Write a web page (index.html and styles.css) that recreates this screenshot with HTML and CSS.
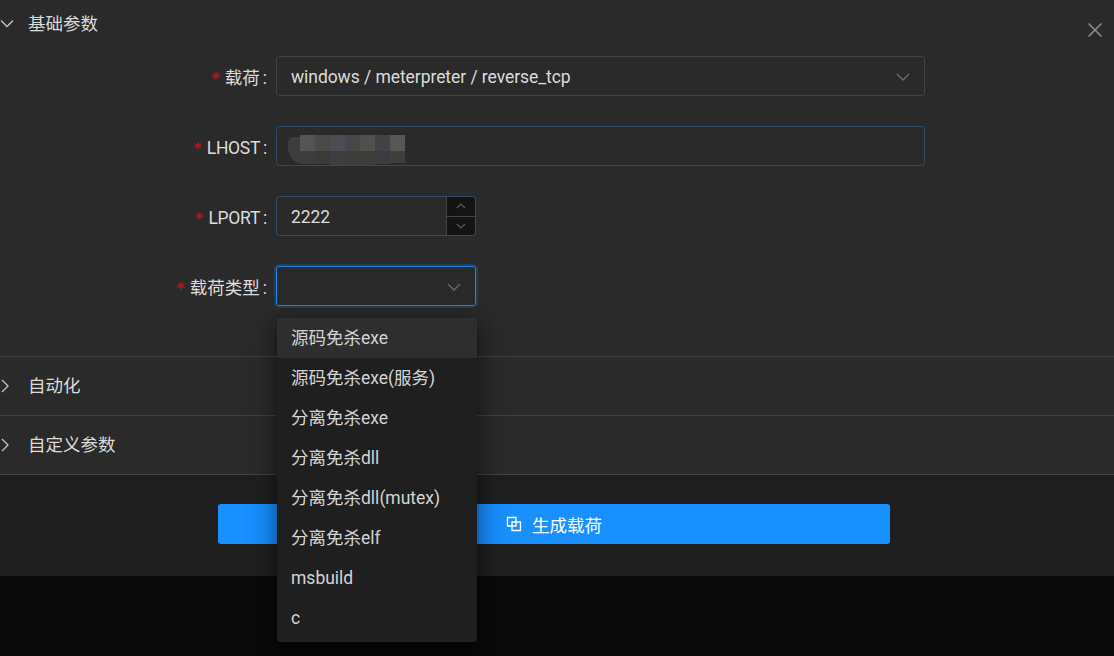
FILE: index.html
```html
<!DOCTYPE html>
<html lang="zh">
<head>
<meta charset="utf-8">
<title>生成载荷</title>
<link rel="stylesheet" href="styles.css">
</head>
<body>
<div class="modal">
  <svg class="close" width="16" height="16" viewBox="0 0 16 16"><path d="M1.500 1.500 14.500 14.500M14.500 1.500 1.500 14.500"/></svg>
  <section class="panel panel-open">
    <header class="panel-head head-first">
      <svg class="arrow arrow-down" width="14" height="14" viewBox="0 0 14 14"><path d="M1 3.500 7 9.500 13 3.500"/></svg>
      <span>基础参数</span>
    </header>
    <div class="form">
      <div class="row">
        <label class="label"><i class="req">*</i>载荷<span class="colon">:</span></label>
        <div class="control wide muted-border"><span class="value">windows / meterpreter / reverse_tcp</span>
          <svg class="chev" width="14" height="14" viewBox="0 0 14 14"><path d="M1 4 7 10 13 4"/></svg></div>
      </div>
      <div class="row">
        <label class="label label-latin"><i class="req">*</i>LHOST<span class="colon">:</span></label>
        <div class="control wide blue-border">
          <svg class="blur" width="118" height="30" viewBox="0 0 118 30">
            <path fill="#3d3d3d" d="M0 6 4 2h8v12H0zM4 14h8v14H10Q2 26 0 14z"/>
            <rect x="12" width="15" height="16" y="0" fill="#555"/><rect x="27" width="15" height="16" y="0" fill="#4b4a48"/><rect x="42" width="15" height="16" y="0" fill="#4c4d54"/><rect x="57" width="15" height="16" y="0" fill="#474747"/><rect x="72" width="15" height="16" y="0" fill="#52504d"/><rect x="87" width="15" height="16" y="0" fill="#434347"/><rect x="102" width="15" height="16" y="0" fill="#585852"/>
            <path fill="#3c3d3e" d="M12 16h15v13H12z"/><path fill="#3b3a38" d="M27 16h15v13H27z"/><path fill="#3d3f3e" d="M42 16h15v14H42z"/><path fill="#3d3d3c" d="M57 16h15v14H57z"/><path fill="#3e3d3c" d="M72 16h15v14H72z"/><path fill="#3c3c3d" d="M87 16h15v13H87z"/><path fill="#3f3f3e" d="M102 16h15v12h-15z"/>
          </svg>
        </div>
      </div>
      <div class="row">
        <label class="label label-latin"><i class="req">*</i>LPORT<span class="colon">:</span></label>
        <div class="control narrow blue-border"><span class="value">2222</span>
          <div class="stepper">
            <div class="step"><svg width="10" height="10" viewBox="0 0 10 10"><path d="M1 7 5 3 9 7"/></svg></div>
            <div class="step step-down"><svg width="10" height="10" viewBox="0 0 10 10"><path d="M1 3 5 7 9 3"/></svg></div>
          </div>
        </div>
      </div>
      <div class="row">
        <label class="label"><i class="req">*</i>载荷类型<span class="colon">:</span></label>
        <div class="control narrow focused">
          <svg class="chev" width="14" height="14" viewBox="0 0 14 14"><path d="M1 4 7 10 13 4"/></svg>
          <ul class="menu">
            <li class="active">源码免杀exe</li>
            <li>源码免杀exe(服务)</li>
            <li>分离免杀exe</li>
            <li>分离免杀dll</li>
            <li>分离免杀dll(mutex)</li>
            <li>分离免杀elf</li>
            <li>msbuild</li>
            <li>c</li>
          </ul>
        </div>
      </div>
    </div>
  </section>
  <section class="panel">
    <header class="panel-head">
      <svg class="arrow" width="14" height="14" viewBox="0 0 14 14"><path d="M3 1 9 7 3 13"/></svg>
      <span>自动化</span>
    </header>
  </section>
  <section class="panel">
    <header class="panel-head">
      <svg class="arrow" width="14" height="14" viewBox="0 0 14 14"><path d="M3 1 9 7 3 13"/></svg>
      <span>自定义参数</span>
    </header>
  </section>
  <footer class="foot">
    <button class="submit" type="button">
      <svg width="16" height="16" viewBox="0 0 16 16"><path d="M1.500 1.500h8.500v8.500h-8.500zM6 6h8.500v8.500h-8.500z"/></svg>
      <span>生成载荷</span>
    </button>
  </footer>
</div>
</body>
</html>
```
FILE: styles.css
```css
* { box-sizing: border-box; }
html, body { margin: 0; height: 100%; }
body {
  background: #0a0a0a;
  overflow: hidden;
  font-family: Roboto, "Noto Sans CJK SC", sans-serif;
  font-size: 17.5px;
  color: #dcdcdc;
}
.modal { position: relative; background: #2a2a2a; height: 576px; }
.close { position: absolute; top: 22px; left: 1087px; fill: none; stroke: #8c8c8c; stroke-width: 1.6; }
.panel { border-bottom: 1px solid #424242; }
.panel-head {
  display: flex;
  align-items: center;
  height: 58px;
  padding-left: 28px;
  position: relative;
  line-height: 24px;
}
.head-first { height: 48px; }
.arrow { position: absolute; left: -1px; top: 22px; fill: none; stroke: #c4c4c4; stroke-width: 1.3; }
.arrow-down { top: 17px; left: 0; }
.form { display: flex; flex-direction: column; gap: 30px; padding: 8px 0 50px; }
.row { display: flex; align-items: center; height: 40px; }
.label { width: 276px; text-align: right; white-space: nowrap; }
.label-latin { padding-top: 3px; letter-spacing: -0.3px; }
.colon { margin: 0 9px 0 3px; }
.req { color: #a61d24; font-style: normal; font-weight: 700; margin-right: 5px; font-family: "DejaVu Sans", sans-serif; font-size: 16px; letter-spacing: 0; }
.control {
  position: relative;
  display: flex;
  align-items: center;
  height: 40px;
  padding-left: 14px;
  border: 1px solid #434343;
  border-radius: 3px;
}
.wide { width: 649px; }
.narrow { width: 200px; }
.blue-border { border-color: #2f4a66; }
.focused { border-color: #1c84e4; box-shadow: 0 0 0 2px rgba(24, 144, 255, .2); }
.value { white-space: nowrap; line-height: 40px; padding-top: 2px; letter-spacing: -0.06px; }
.chev { position: absolute; right: 14px; top: 13px; fill: none; stroke: #6d6d6d; stroke-width: 1.3; }
.blur { position: absolute; left: 11px; top: 8px; }
.stepper { position: absolute; right: 0; top: 0; bottom: 0; width: 29px; display: flex; flex-direction: column; border-left: 1px solid #434343; background: #141414; border-radius: 0 3px 3px 0; }
.step { flex: 1; display: flex; align-items: center; justify-content: center; }
.step-down { border-top: 1px solid #434343; }
.step svg { fill: none; stroke: #5e5e5e; stroke-width: 1.1; }
.menu {
  position: absolute;
  top: 51px;
  left: 0;
  z-index: 5;
  width: 200px;
  margin: 0;
  padding: 0 0 4px;
  list-style: none;
  background: #1f1f1f;
  border-radius: 3px;
  box-shadow: 0 3px 6px -4px rgba(0,0,0,.48), 0 6px 16px rgba(0,0,0,.32), 0 9px 28px 8px rgba(0,0,0,.2);
}
.menu li { height: 40px; line-height: 41px; padding-left: 14px; white-space: nowrap; color: #d4d4d4; }
.menu .active { background: #2e2e2e; }
.foot { height: 101px; background: #1f1f1f; padding: 29px 0 0 218px; }
.submit {
  display: flex;
  align-items: center;
  justify-content: center;
  gap: 10px;
  width: 672px;
  height: 40px;
  border: 0;
  border-radius: 3px;
  background: #1890ff;
  color: #fff;
  font: inherit;
  padding: 0;
}
.submit svg { fill: none; stroke: #fff; stroke-width: 1.3; }
```
